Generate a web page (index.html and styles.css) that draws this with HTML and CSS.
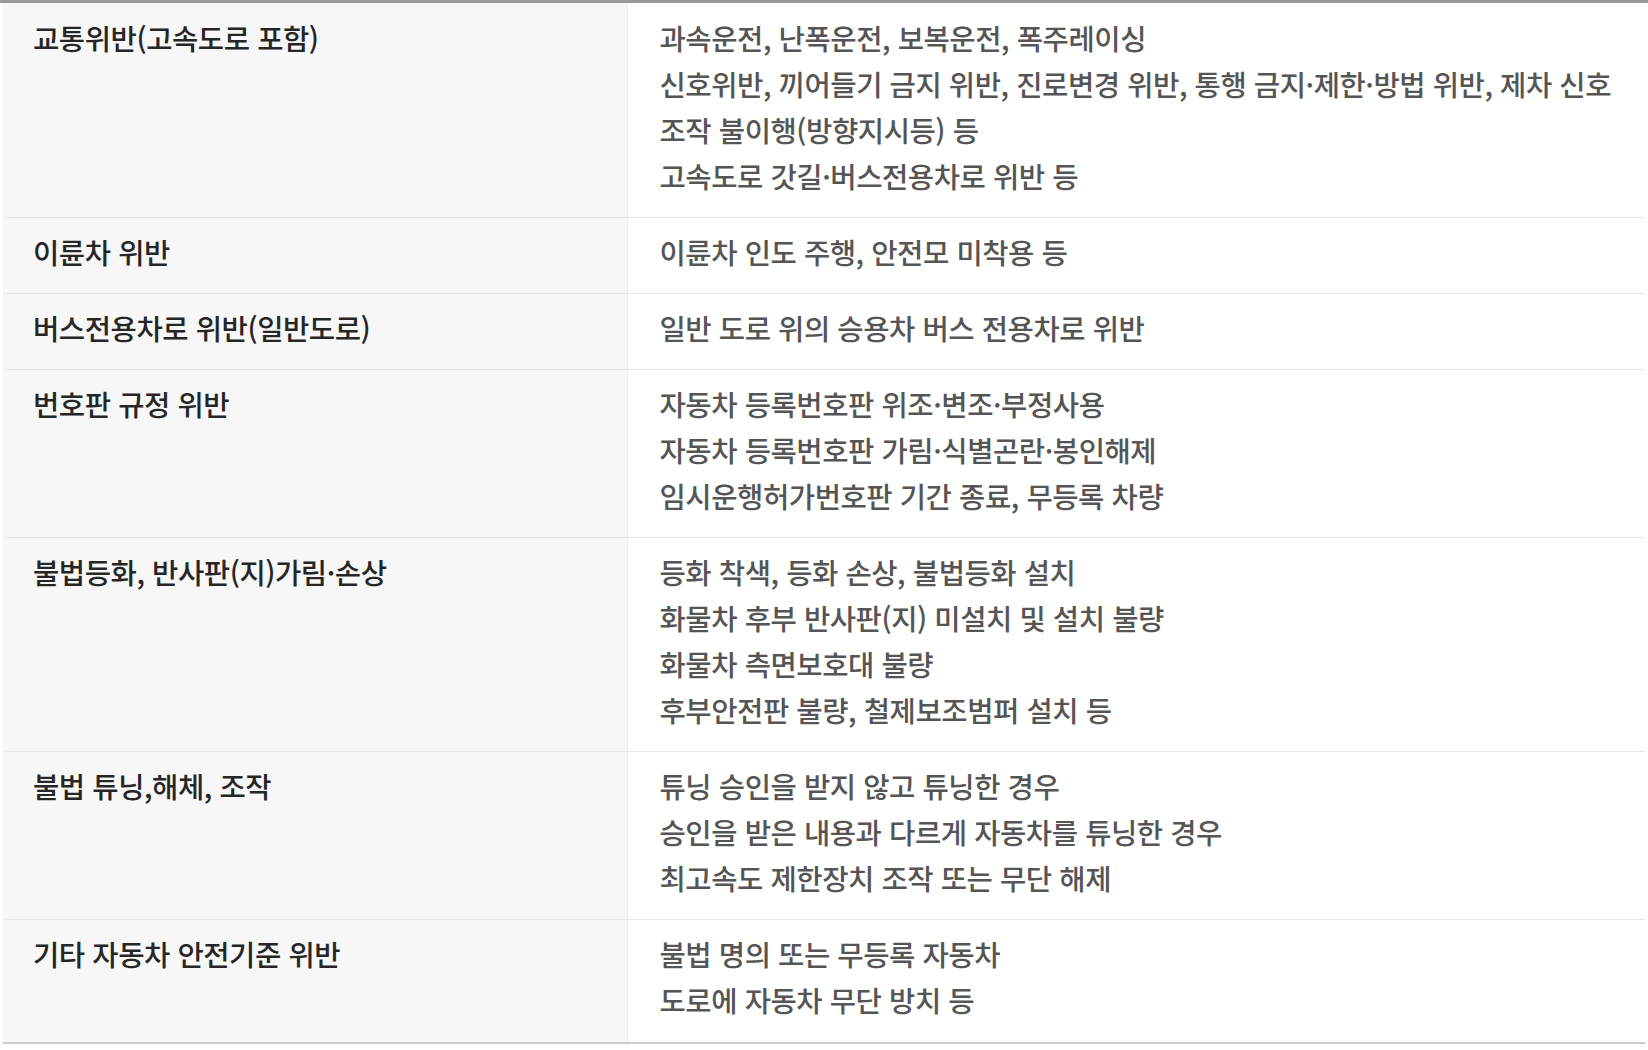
FILE: index.html
```html
<!DOCTYPE html>
<html lang="ko">
<head>
<meta charset="utf-8">
<title>위반 유형</title>
<link rel="stylesheet" href="styles.css">
</head>
<body>
<div class="wrap">
  <table class="tbl">
    <colgroup><col class="c1"><col class="c2"></colgroup>
    <tbody>
      <tr>
        <th>교통위반(고속도로 포함)</th>
        <td>과속운전, 난폭운전, 보복운전, 폭주레이싱<br>신호위반, 끼어들기 금지 위반, 진로변경 위반, 통행 금지·제한·방법 위반, 제차 신호<br>조작 불이행(방향지시등) 등<br>고속도로 갓길·버스전용차로 위반 등</td>
      </tr>
      <tr>
        <th>이륜차 위반</th>
        <td>이륜차 인도 주행, 안전모 미착용 등</td>
      </tr>
      <tr>
        <th>버스전용차로 위반(일반도로)</th>
        <td>일반 도로 위의 승용차 버스 전용차로 위반</td>
      </tr>
      <tr>
        <th>번호판 규정 위반</th>
        <td>자동차 등록번호판 위조·변조·부정사용<br>자동차 등록번호판 가림·식별곤란·봉인해제<br>임시운행허가번호판 기간 종료, 무등록 차량</td>
      </tr>
      <tr>
        <th>불법등화, 반사판(지)가림·손상</th>
        <td>등화 착색, 등화 손상, 불법등화 설치<br>화물차 후부 반사판(지) 미설치 및 설치 불량<br>화물차 측면보호대 불량<br>후부안전판 불량, 철제보조범퍼 설치 등</td>
      </tr>
      <tr>
        <th>불법 튜닝,해체, 조작</th>
        <td>튜닝 승인을 받지 않고 튜닝한 경우<br>승인을 받은 내용과 다르게 자동차를 튜닝한 경우<br>최고속도 제한장치 조작 또는 무단 해제</td>
      </tr>
      <tr>
        <th>기타 자동차 안전기준 위반</th>
        <td>불법 명의 또는 무등록 자동차<br>도로에 자동차 무단 방치 등</td>
      </tr>
    </tbody>
  </table>
</div>
</body>
</html>
```

FILE: styles.css
```css
html, body {
  margin: 0;
  padding: 0;
  background: #ffffff;
}

.wrap {
  border-top: 3px solid #9a9a9a;
  width: 1648px;
}

.tbl {
  margin: 0 3px;
  width: 1642px;
  border-collapse: collapse;
  table-layout: fixed;
  border-bottom: 2px solid #cccccc;
  font-family: "Noto Sans CJK KR", "Noto Sans", sans-serif;
  font-size: 28.6px;
  line-height: 46px;
  letter-spacing: -0.45px;
}

.c1 { width: 624px; }

.tbl th,
.tbl td {
  text-align: left;
  vertical-align: top;
  font-weight: 500;
  padding: 11px 20px 18px 30px;
  border-top: 1px solid #e6e6e6;
}

.tbl tr:first-child th,
.tbl tr:first-child td {
  border-top: none;
  padding-top: 12px;
}

.tbl tr:last-child th,
.tbl tr:last-child td {
  padding-bottom: 19px;
}

.tbl th {
  background: #f7f7f7;
  color: #262626;
  border-right: 1px solid #ececec;
}

.tbl td {
  color: #555555;
  padding-left: 32px;
}
```
